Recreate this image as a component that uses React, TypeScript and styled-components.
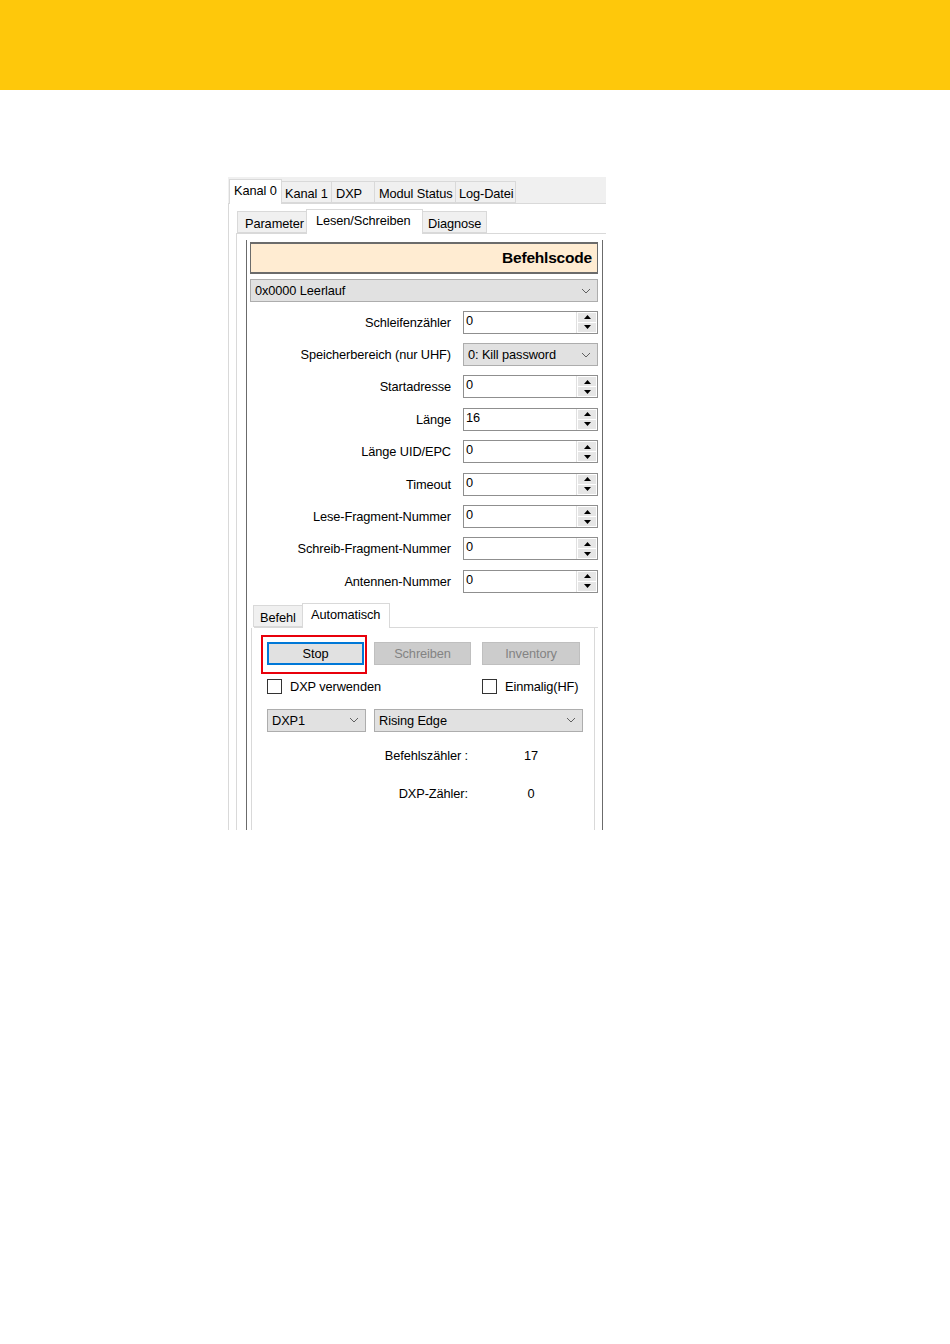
import React from 'react';
import styled, { createGlobalStyle } from 'styled-components';

const GlobalStyle = createGlobalStyle`
  body {
    margin: 0;
    background: #ffffff;
    font-family: 'Liberation Sans', Arial, sans-serif;
  }
`;

const Page = styled.div`
  width: 950px;
  min-height: 1344px;
  background: #ffffff;
`;

const TopBar = styled.div`
  height: 90px;
  background: #fec80b;
`;

const Shot = styled.div`
  margin: 87px 0 0 228px;
  width: 378px;
  height: 653px;
  overflow: hidden;
  font-size: 12.8px;
  color: #000000;
  letter-spacing: -0.1px;
`;

const TabStrip = styled.div<{ $bg?: string; $pad?: number }>`
  display: flex;
  align-items: flex-end;
  height: 26px;
  padding-left: ${(p) => p.$pad ?? 0}px;
  background: ${(p) => p.$bg ?? 'transparent'};
  border-bottom: 1px solid #d9d9d9;
`;

const Tab = styled.div<{ $active?: boolean; $w: number; $pl?: number }>`
  width: ${(p) => p.$w}px;
  height: ${(p) => (p.$active ? 25 : 22)}px;
  margin-bottom: ${(p) => (p.$active ? -1 : 0)}px;
  padding: ${(p) => (p.$active ? 3 : 4)}px 0 0 ${(p) => p.$pl ?? 4}px;
  box-sizing: border-box;
  background: ${(p) => (p.$active ? '#ffffff' : '#f0f0f0')};
  border: 1px solid #d9d9d9;
  border-bottom: ${(p) => (p.$active ? 'none' : '1px solid #d9d9d9')};
  margin-left: -1px;
  white-space: nowrap;
  overflow: hidden;
  position: relative;
  z-index: ${(p) => (p.$active ? 1 : 0)};
`;

const OuterBody = styled.div`
  border-left: 1px solid #d9d9d9;
  padding: 3px 0 0 7px;
  height: 640px;
`;

const InnerBody = styled.div`
  border-left: 1px solid #d9d9d9;
  padding: 6px 0 0 9px;
  height: 600px;
`;

const Panel = styled.div`
  border-left: 1px solid #6b6b6b;
  border-right: 1px solid #6b6b6b;
  width: 357px;
  padding: 2px 4px 0 3px;
  box-sizing: border-box;
  height: 600px;
`;

const Header = styled.div`
  height: 32px;
  box-sizing: border-box;
  background: #ffecd2;
  border: 1px solid #6b6b6b;
  border-top-width: 2px;
  border-bottom-width: 2px;
  display: flex;
  align-items: center;
  justify-content: flex-end;
  padding-right: 5px;
  font-size: 15.5px;
  font-weight: bold;
  letter-spacing: -0.2px;
`;

const Combo = styled.div<{ $w?: number; $mt?: number }>`
  height: 23px;
  width: ${(p) => (p.$w ? `${p.$w}px` : '100%')};
  margin-top: ${(p) => p.$mt ?? 0}px;
  box-sizing: border-box;
  background: #e1e1e1;
  border: 1px solid #adadad;
  display: flex;
  align-items: center;
  justify-content: space-between;
  padding: 0 6px 0 4px;
  white-space: nowrap;
`;

const Chevron = () => (
  <svg width="10" height="6" viewBox="0 0 10 6">
    <polyline points="1,1 5,5 9,1" fill="none" stroke="#606060" strokeWidth="1" />
  </svg>
);

const Rows = styled.div`
  margin-top: 4px;
  display: flex;
  flex-direction: column;
`;

const Row = styled.div`
  height: 32.4px;
  display: grid;
  grid-template-columns: 201px 135px;
  column-gap: 12px;
  align-items: center;
`;

const Label = styled.div`
  text-align: right;
  white-space: nowrap;
`;

const Spin = styled.div`
  height: 23px;
  box-sizing: border-box;
  border: 1px solid #8f8f8f;
  background: #ffffff;
  display: flex;
`;

const SpinValue = styled.div`
  flex: 1;
  padding: 1px 0 0 2px;
`;

const SpinButtons = styled.div`
  width: 18px;
  display: flex;
  flex-direction: column;
  border-left: 1px solid #e0e0e0;
  padding: 1px;
  gap: 1px;
  background: #ffffff;
`;

const SpinHalf = styled.div`
  flex: 1;
  background: #e6e6e6;
  display: flex;
  align-items: center;
  justify-content: center;
`;

const Arrow = ({ up }: { up?: boolean }) => (
  <svg width="7" height="4" viewBox="0 0 7 4">
    <polygon points={up ? '0,4 7,4 3.5,0' : '0,0 7,0 3.5,4'} fill="#000" />
  </svg>
);

const SubTabs = styled.div`
  margin-top: 3px;
  padding-left: 4px;
`;

const AutoPage = styled.div`
  border-left: 1px solid #d9d9d9;
  border-right: 1px solid #d9d9d9;
  margin: 0 3px 0 1px;
  height: 220px;
  padding: 14px 0 0 15px;
`;

const ButtonRow = styled.div`
  display: flex;
  gap: 10px;
`;

const Button = styled.div<{ $disabled?: boolean; $focus?: boolean; $w?: number }>`
  width: ${(p) => p.$w ?? 97}px;
  height: 23px;
  box-sizing: border-box;
  display: flex;
  align-items: center;
  justify-content: center;
  background: ${(p) => (p.$disabled ? '#cccccc' : '#e1e1e1')};
  color: ${(p) => (p.$disabled ? '#838383' : '#000000')};
  border: ${(p) => (p.$focus ? '2px solid #0078d7' : '1px solid #bfbfbf')};
  position: relative;
`;

const Highlight = styled.div`
  position: absolute;
  top: -9px;
  left: -8px;
  right: -5px;
  bottom: -11px;
  border: 2px solid #e8000b;
  pointer-events: none;
`;

const CheckRow = styled.div`
  margin-top: 14px;
  display: grid;
  grid-template-columns: 215px auto;
  align-items: center;
`;

const CheckItem = styled.div`
  display: flex;
  align-items: center;
  gap: 8px;
  white-space: nowrap;
`;

const Box = styled.div`
  width: 13px;
  height: 13px;
  border: 1px solid #333333;
  background: #ffffff;
`;

const ComboRow = styled.div`
  margin-top: 15px;
  display: flex;
  gap: 8px;
`;

const Counters = styled.div`
  margin-top: 16px;
  margin-left: -15px;
  display: grid;
  grid-template-columns: 216px 62px;
  column-gap: 32px;
  row-gap: 22px;
  align-items: center;
`;

const CounterLabel = styled.div`
  text-align: right;
  white-space: nowrap;
  line-height: 16px;
`;

const CounterValue = styled.div`
  text-align: center;
  line-height: 16px;
`;

const rows = [
  'Schleifenzähler',
  'Speicherbereich (nur UHF)',
  'Startadresse',
  'Länge',
  'Länge UID/EPC',
  'Timeout',
  'Lese-Fragment-Nummer',
  'Schreib-Fragment-Nummer',
  'Antennen-Nummer',
];

const values: Record<string, string> = { Länge: '16' };

const SpinBox = ({ value }: { value: string }) => (
  <Spin>
    <SpinValue>{value}</SpinValue>
    <SpinButtons>
      <SpinHalf>
        <Arrow up />
      </SpinHalf>
      <SpinHalf>
        <Arrow />
      </SpinHalf>
    </SpinButtons>
  </Spin>
);

const App = () => {
  return (
    <Page>
      <GlobalStyle />
      <TopBar />
      <Shot>
        <TabStrip $bg="#f0f0f0" $pad={2}>
          <Tab $active $w={53} $pl={4}>
            Kanal 0
          </Tab>
          <Tab $w={51} $pl={3}>
            Kanal 1
          </Tab>
          <Tab $w={44}>DXP</Tab>
          <Tab $w={82}>Modul Status</Tab>
          <Tab $w={61} $pl={3}>
            Log-Datei
          </Tab>
        </TabStrip>
        <OuterBody>
          <TabStrip $pad={2}>
            <Tab $w={70} $pl={7}>
              Parameter
            </Tab>
            <Tab $active $w={117} $pl={9}>
              Lesen/Schreiben
            </Tab>
            <Tab $w={65} $pl={5}>
              Diagnose
            </Tab>
          </TabStrip>
          <InnerBody>
            <Panel>
              <Header>Befehlscode</Header>
              <Combo $mt={5}>
                <span>0x0000 Leerlauf</span>
                <Chevron />
              </Combo>
              <Rows>
                {rows.map((r) => (
                  <Row key={r}>
                    <Label>{r}</Label>
                    {r.startsWith('Speicher') ? (
                      <Combo>
                        <span>0: Kill password</span>
                        <Chevron />
                      </Combo>
                    ) : (
                      <SpinBox value={values[r] ?? '0'} />
                    )}
                  </Row>
                ))}
              </Rows>
              <SubTabs>
                <TabStrip>
                  <Tab $w={50} $pl={6}>
                    Befehl
                  </Tab>
                  <Tab $active $w={88} $pl={8}>
                    Automatisch
                  </Tab>
                </TabStrip>
              </SubTabs>
              <AutoPage>
                <ButtonRow>
                  <Button $focus>
                    Stop
                    <Highlight />
                  </Button>
                  <Button $disabled>Schreiben</Button>
                  <Button $disabled $w={98} style={{ marginLeft: 1 }}>
                    Inventory
                  </Button>
                </ButtonRow>
                <CheckRow>
                  <CheckItem>
                    <Box />
                    DXP verwenden
                  </CheckItem>
                  <CheckItem>
                    <Box />
                    Einmalig(HF)
                  </CheckItem>
                </CheckRow>
                <ComboRow>
                  <Combo $w={99}>
                    <span>DXP1</span>
                    <Chevron />
                  </Combo>
                  <Combo $w={209}>
                    <span>Rising Edge</span>
                    <Chevron />
                  </Combo>
                </ComboRow>
                <Counters>
                  <CounterLabel>Befehlszähler :</CounterLabel>
                  <CounterValue>17</CounterValue>
                  <CounterLabel>DXP-Zähler:</CounterLabel>
                  <CounterValue>0</CounterValue>
                </Counters>
              </AutoPage>
            </Panel>
          </InnerBody>
        </OuterBody>
      </Shot>
    </Page>
  );
};

export default App;
